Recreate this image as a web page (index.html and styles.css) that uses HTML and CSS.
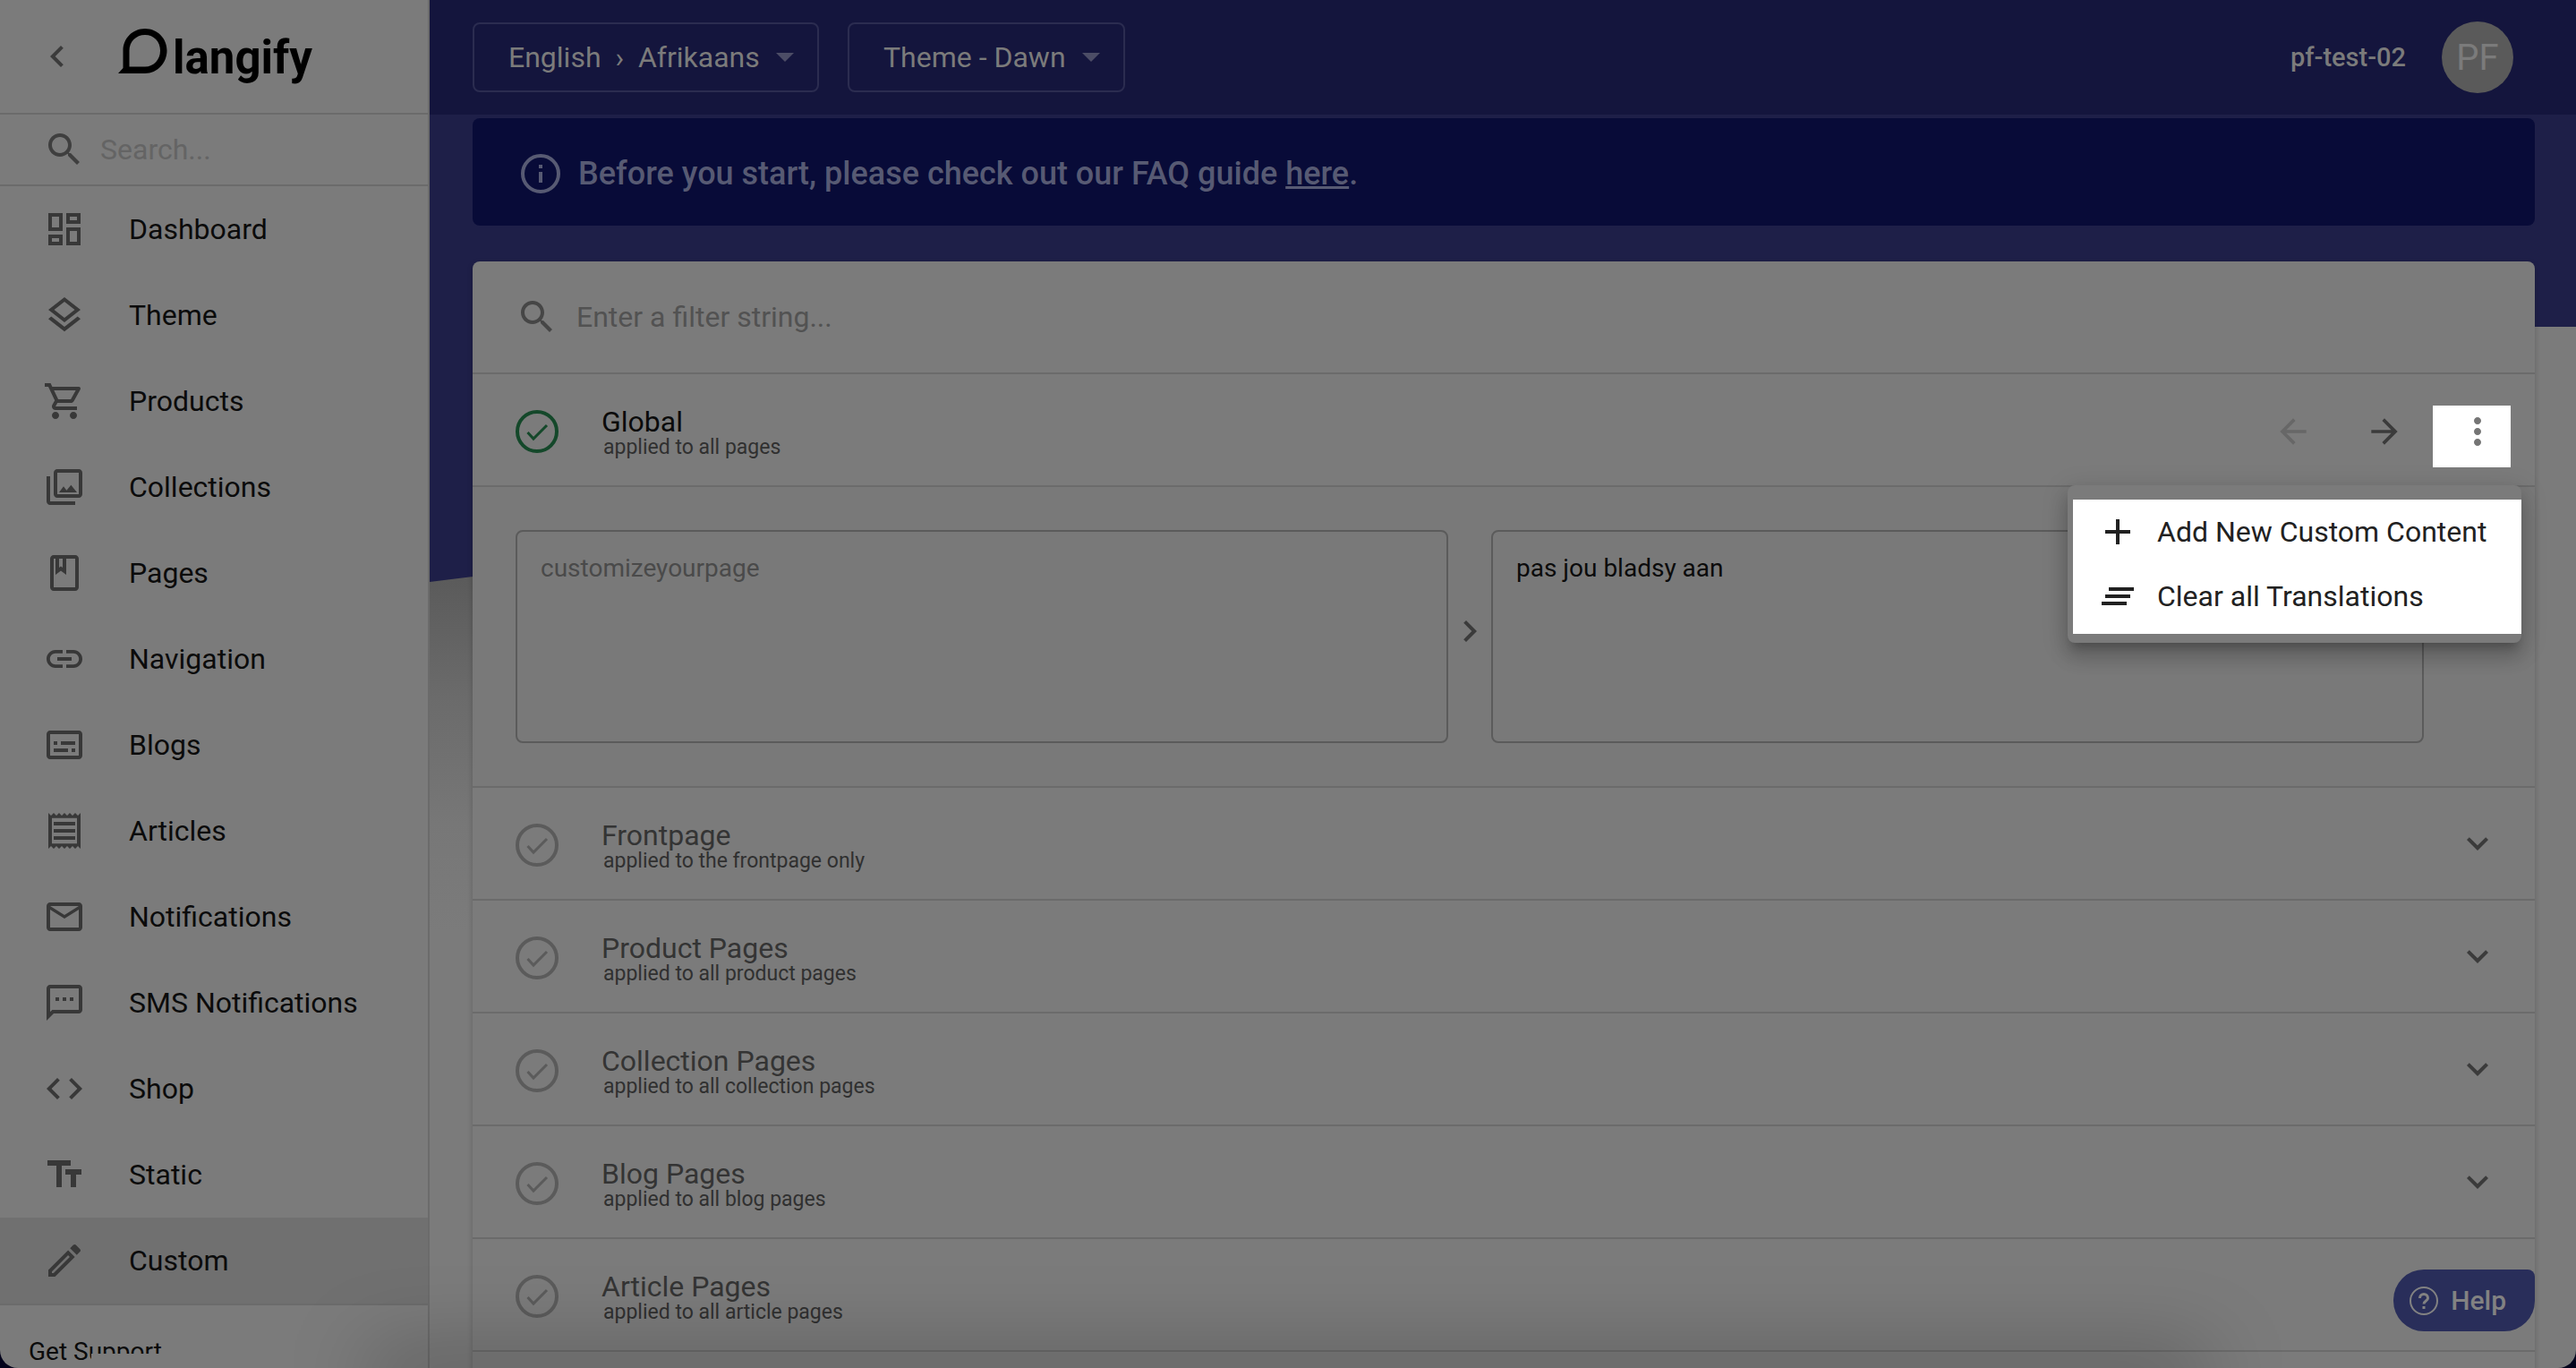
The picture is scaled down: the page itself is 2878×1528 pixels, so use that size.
FILE: index.html
```html
<!DOCTYPE html>
<html lang="en">
<head>
  <meta charset="UTF-8">
  <title>langify - Custom</title>
  <meta name="viewport" content="width=device-width, initial-scale=1.0">
  <link rel="stylesheet" href="styles.css">
</head>
<body>
  <div class="app">
    <aside class="sidebar">
      <div class="sidebar-header">
        <button class="icon-btn" aria-label="Collapse menu"><svg class="icon" viewBox="0 0 24 24"><path d="M15.41 7.41L14 6l-6 6 6 6 1.41-1.41L10.83 12z"/></svg></button>
        <a class="logo" href="#">
          <svg class="logo-mark" viewBox="0 0 55 50"><path fill-rule="evenodd" d="M0 50L5.500 44V24.500C5.500 11 16 0 30 0S54.500 11 54.500 24.500 44 50 30 50zM12.500 42.500H30C40 42.500 47 34.500 47 24.500S40 7 30 7 12.500 14.500 12.500 24.500z"/></svg>
          <span>langify</span>
        </a>
      </div>
      <label class="sidebar-search">
        <svg class="icon" viewBox="0 0 24 24"><path d="M15.500 14h-.79l-.28-.27C15.410 12.590 16 11.110 16 9.500 16 5.910 13.090 3 9.500 3S3 5.910 3 9.500 5.910 16 9.500 16c1.610 0 3.090-.59 4.230-1.570l.27.28v.79l5 4.990L20.490 19l-4.990-5zm-6 0C7.010 14 5 11.990 5 9.500S7.010 5 9.500 5 14 7.010 14 9.500 11.990 14 9.500 14z"/></svg>
        <input type="text" placeholder="Search..." aria-label="Search">
      </label>
      <nav class="menu">
        <a class="menu-item" href="#"><svg class="icon" viewBox="0 0 24 24"><path d="M19 5v2h-4V5h4M9 5v6H5V5h4m10 8v6h-4v-6h4M9 17v2H5v-2h4M21 3h-8v6h8V3zM11 3H3v10h8V3zm10 8h-8v10h8V11zm-10 4H3v6h8v-6z"/></svg>Dashboard</a>
        <a class="menu-item" href="#"><svg class="icon" viewBox="0 0 24 24"><path d="M11.990 18.540l-7.370-5.730L3 14.070l9 7 9-7-1.630-1.270zM12 16l7.360-5.730L21 9l-9-7-9 7 1.630 1.270L12 16zm0-11.470L17.740 9 12 13.470 6.260 9 12 4.530z"/></svg>Theme</a>
        <a class="menu-item" href="#"><svg class="icon" viewBox="0 0 24 24"><path d="M15.550 13c.75 0 1.410-.41 1.750-1.030l3.580-6.490c.37-.66-.11-1.480-.87-1.480H5.210l-.94-2H1v2h2l3.600 7.590-1.350 2.440C4.520 15.370 5.480 17 7 17h12v-2H7l1.100-2h7.450zM6.160 6h12.150l-2.760 5H8.530L6.160 6zM7 18c-1.100 0-1.990.9-1.990 2S5.900 22 7 22s2-.9 2-2-.9-2-2-2zm10 0c-1.100 0-1.990.9-1.990 2s.89 2 1.990 2 2-.9 2-2-.9-2-2-2z"/></svg>Products</a>
        <a class="menu-item" href="#"><svg class="icon" viewBox="0 0 24 24"><path d="M20 4v12H8V4h12m0-2H8c-1.100 0-2 .9-2 2v12c0 1.100.9 2 2 2h12c1.100 0 2-.9 2-2V4c0-1.100-.9-2-2-2zm-8.500 9.670l1.690 2.260 2.480-3.100L19 15H9zM2 6v14c0 1.100.9 2 2 2h14v-2H4V6H2z"/></svg>Collections</a>
        <a class="menu-item" href="#"><svg class="icon" viewBox="0 0 24 24"><path d="M18 2H6c-1.100 0-2 .9-2 2v16c0 1.100.9 2 2 2h12c1.100 0 2-.9 2-2V4c0-1.100-.9-2-2-2zM9 4h2v5l-1-.75L9 9V4zm9 16H6V4h1v9l3-2.250L13 13V4h5v16z"/></svg>Pages</a>
        <a class="menu-item" href="#"><svg class="icon" viewBox="0 0 24 24"><path d="M3.900 12c0-1.710 1.390-3.100 3.100-3.100h4V7H7c-2.760 0-5 2.240-5 5s2.240 5 5 5h4v-1.900H7c-1.710 0-3.100-1.390-3.100-3.100zM8 13h8v-2H8v2zm9-6h-4v1.900h4c1.710 0 3.100 1.390 3.100 3.100s-1.390 3.100-3.100 3.100h-4V17h4c2.760 0 5-2.240 5-5s-2.240-5-5-5z"/></svg>Navigation</a>
        <a class="menu-item" href="#"><svg class="icon" viewBox="0 0 24 24"><path d="M20 4H4c-1.100 0-2 .9-2 2v12c0 1.100.9 2 2 2h16c1.100 0 2-.9 2-2V6c0-1.100-.9-2-2-2zm0 14H4V6h16v12zM6 10h2v2H6zm0 4h8v2H6zm10 0h2v2h-2zm-6-4h8v2h-8z"/></svg>Blogs</a>
        <a class="menu-item" href="#"><svg class="icon" viewBox="0 0 24 24"><path d="M19.500 3.500L18 2l-1.500 1.500L15 2l-1.500 1.500L12 2l-1.500 1.500L9 2 7.500 3.500 6 2 4.500 3.500 3 2v20l1.500-1.500L6 22l1.500-1.500L9 22l1.500-1.500L12 22l1.500-1.500L15 22l1.500-1.500L18 22l1.500-1.500L21 22V2l-1.500 1.500zM19 19.090H5V4.910h14v14.180zM6 15h12v2H6zm0-4h12v2H6zm0-4h12v2H6z"/></svg>Articles</a>
        <a class="menu-item" href="#"><svg class="icon" viewBox="0 0 24 24"><path d="M22 6c0-1.100-.9-2-2-2H4c-1.100 0-2 .9-2 2v12c0 1.100.9 2 2 2h16c1.100 0 2-.9 2-2V6zm-2 0l-8 4.990L4 6h16zm0 12H4V8l8 5 8-5v10z"/></svg>Notifications</a>
        <a class="menu-item" href="#"><svg class="icon" viewBox="0 0 24 24"><path d="M20 2H4c-1.100 0-2 .9-2 2v18l4-4h14c1.100 0 2-.9 2-2V4c0-1.100-.9-2-2-2zm0 14H5.170L4 17.170V4h16v12zM7 9h2v2H7zm4 0h2v2h-2zm4 0h2v2h-2z"/></svg>SMS Notifications</a>
        <a class="menu-item" href="#"><svg class="icon" viewBox="0 0 24 24"><path d="M9.400 16.600L4.800 12l4.600-4.600L8 6l-6 6 6 6 1.400-1.400zm5.200 0l4.600-4.600-4.600-4.600L16 6l6 6-6 6-1.400-1.400z"/></svg>Shop</a>
        <a class="menu-item" href="#"><svg class="icon" viewBox="0 0 24 24"><path d="M2.500 4v3h5v12h3V7h5V4h-13zm19 5h-9v3h3v7h3v-7h3V9z"/></svg>Static</a>
        <a class="menu-item active" href="#"><svg class="icon" viewBox="0 0 24 24"><path d="M14.060 9.020l.92.92L5.920 19H5v-.92l9.060-9.060M17.660 3c-.25 0-.51.1-.7.29l-1.830 1.830 3.750 3.750 1.830-1.830c.39-.39.39-1.020 0-1.410l-2.340-2.340c-.2-.2-.45-.29-.71-.29zm-3.600 3.190L3 17.250V21h3.750L17.810 9.940l-3.750-3.750z"/></svg>Custom</a>
      </nav>
      <div class="support"><a href="#">Get Support</a></div>
    </aside>

    <main class="main">
      <header class="topbar">
        <label class="picker">
          <select aria-label="Language"><option>English&nbsp; › &nbsp;Afrikaans</option></select>
          <svg class="caret" viewBox="0 0 20 10"><path d="M0 0h20L10 10z"/></svg>
        </label>
        <label class="picker">
          <select aria-label="Theme"><option>Theme - Dawn</option></select>
          <svg class="caret" viewBox="0 0 20 10"><path d="M0 0h20L10 10z"/></svg>
        </label>
        <span class="shop-name">pf-test-02</span>
        <span class="avatar">PF</span>
      </header>

      <div class="content">
        <div class="banner">
          <svg class="icon-lg" viewBox="0 0 48 48"><circle cx="24" cy="24" r="20" fill="none" stroke="currentColor" stroke-width="4"/><path d="M22 22h4v12h-4zM22 14h4v4h-4z"/></svg>
          <p>Before you start, please check out our FAQ guide <a href="#">here</a>.</p>
        </div>

        <section class="card">
          <label class="filter">
            <svg class="icon" viewBox="0 0 24 24"><path d="M15.500 14h-.79l-.28-.27C15.410 12.590 16 11.110 16 9.500 16 5.910 13.090 3 9.500 3S3 5.910 3 9.500 5.910 16 9.500 16c1.610 0 3.090-.59 4.230-1.570l.27.28v.79l5 4.990L20.490 19l-4.990-5zm-6 0C7.010 14 5 11.990 5 9.500S7.010 5 9.500 5 14 7.010 14 9.500 11.990 14 9.500 14z"/></svg>
            <input type="text" placeholder="Enter a filter string..." aria-label="Filter">
          </label>

          <div class="group open">
            <svg class="check" viewBox="0 0 48 48"><circle cx="24" cy="24" r="22" stroke-width="4"/><path d="M13.500 25l6.500 7 15-15" stroke-width="3"/></svg>
            <div class="group-text"><h2>Global</h2><p>applied to all pages</p></div>
            <div class="actions">
              <button class="icon-btn" aria-label="Previous" disabled><svg class="arrow" viewBox="0 0 24 24"><path d="M20 11H7.830l5.590-5.590L12 4l-8 8 8 8 1.410-1.410L7.830 13H20v-2z"/></svg></button>
              <button class="icon-btn" aria-label="Next"><svg class="arrow" viewBox="0 0 24 24"><path d="M12 4l-1.410 1.410L16.170 11H4v2h12.170l-5.580 5.590L12 20l8-8z"/></svg></button>
              <button class="icon-btn more" aria-label="More actions"><svg class="icon" viewBox="0 0 24 24"><path d="M12 8c1.100 0 2-.9 2-2s-.9-2-2-2-2 .9-2 2 .9 2 2 2zm0 2c-1.100 0-2 .9-2 2s.9 2 2 2 2-.9 2-2-.9-2-2-2zm0 6c-1.100 0-2 .9-2 2s.9 2 2 2 2-.9 2-2-.9-2-2-2z"/></svg></button>
            </div>
            <div class="popup">
              <button class="popup-item"><svg class="icon" viewBox="0 0 24 24"><path d="M19 13h-6v6h-2v-6H5v-2h6V5h2v6h6v2z"/></svg>Add New Custom Content</button>
              <button class="popup-item"><svg class="icon" viewBox="0 0 24 24"><path d="M5 13h14v-2H5v2zm-2 4h14v-2H3v2zM7 7v2h14V7H7z"/></svg>Clear all Translations</button>
            </div>
          </div>

          <div class="translation">
            <textarea class="source" aria-label="Original" readonly>customizeyourpage</textarea>
            <svg class="icon" viewBox="0 0 24 24"><path d="M10 6L8.590 7.410 13.170 12l-4.580 4.590L10 18l6-6z"/></svg>
            <textarea aria-label="Translation">pas jou bladsy aan</textarea>
          </div>

          <div class="group">
            <svg class="check" viewBox="0 0 48 48"><circle cx="24" cy="24" r="22" stroke-width="4"/><path d="M13.500 25l6.500 7 15-15" stroke-width="3"/></svg>
            <div class="group-text"><h2>Frontpage</h2><p>applied to the frontpage only</p></div>
            <button class="icon-btn" aria-label="Expand"><svg class="icon" viewBox="0 0 24 24"><path d="M16.590 8.590L12 13.170 7.410 8.590 6 10l6 6 6-6z"/></svg></button>
          </div>
          <div class="group">
            <svg class="check" viewBox="0 0 48 48"><circle cx="24" cy="24" r="22" stroke-width="4"/><path d="M13.500 25l6.500 7 15-15" stroke-width="3"/></svg>
            <div class="group-text"><h2>Product Pages</h2><p>applied to all product pages</p></div>
            <button class="icon-btn" aria-label="Expand"><svg class="icon" viewBox="0 0 24 24"><path d="M16.590 8.590L12 13.170 7.410 8.590 6 10l6 6 6-6z"/></svg></button>
          </div>
          <div class="group">
            <svg class="check" viewBox="0 0 48 48"><circle cx="24" cy="24" r="22" stroke-width="4"/><path d="M13.500 25l6.500 7 15-15" stroke-width="3"/></svg>
            <div class="group-text"><h2>Collection Pages</h2><p>applied to all collection pages</p></div>
            <button class="icon-btn" aria-label="Expand"><svg class="icon" viewBox="0 0 24 24"><path d="M16.590 8.590L12 13.170 7.410 8.590 6 10l6 6 6-6z"/></svg></button>
          </div>
          <div class="group">
            <svg class="check" viewBox="0 0 48 48"><circle cx="24" cy="24" r="22" stroke-width="4"/><path d="M13.500 25l6.500 7 15-15" stroke-width="3"/></svg>
            <div class="group-text"><h2>Blog Pages</h2><p>applied to all blog pages</p></div>
            <button class="icon-btn" aria-label="Expand"><svg class="icon" viewBox="0 0 24 24"><path d="M16.590 8.590L12 13.170 7.410 8.590 6 10l6 6 6-6z"/></svg></button>
          </div>
          <div class="group">
            <svg class="check" viewBox="0 0 48 48"><circle cx="24" cy="24" r="22" stroke-width="4"/><path d="M13.500 25l6.500 7 15-15" stroke-width="3"/></svg>
            <div class="group-text"><h2>Article Pages</h2><p>applied to all article pages</p></div>
          </div>
          <div class="group-rest"></div>
        </section>
      </div>
    </main>

    <button class="help">
      <svg class="help-icon" viewBox="0 0 32 32"><circle cx="16" cy="16" r="15"/><path d="M11.500 13c0-6 9-6 9 0 0 3-4.500 3-4.500 6.500M16 22v3" stroke-width="3"/></svg>
      Help
    </button>
  </div>
</body>
</html>
```

FILE: styles.css
```css
* { box-sizing: border-box; }
html { background: #03031c; }
body {
  margin: 0;
  height: 100vh;
  overflow: hidden;
  font-family: Roboto, sans-serif;
  font-size: 32px;
  color: #0b0b0b;
}
h2, p { margin: 0; font-weight: 400; }
a { color: inherit; text-decoration: none; }
button, input, select, textarea { font: inherit; color: inherit; }
svg { display: block; flex-shrink: 0; fill: currentColor; }
.icon { width: 48px; height: 48px; }
.icon-lg { width: 48px; height: 48px; }
.icon-btn {
  background: none;
  border: none;
  padding: 0;
  color: #3b3b3b;
  cursor: pointer;
}

.app {
  position: relative;
  display: flex;
  height: 100%;
  background: #7b7b7b;
  border-radius: 0 0 20px 20px;
  overflow: hidden;
}
/* soft shade rising from the bottom edge */
.app::after {
  content: "";
  position: absolute;
  left: 15%;
  right: 15%;
  top: 100%;
  height: 20px;
  box-shadow: 0 0 90px 20px rgba(0, 0, 0, 0.25);
  pointer-events: none;
}

/* Sidebar */
.sidebar {
  width: 480px;
  flex-shrink: 0;
  border-right: 2px solid #6b6b6b;
}
.sidebar-header {
  display: flex;
  align-items: center;
  gap: 44px;
  height: 128px;
  padding-left: 40px;
  border-bottom: 2px solid #6b6b6b;
}
.logo {
  display: flex;
  align-items: center;
  gap: 6px;
  color: #000;
  font-size: 51px;
  font-weight: 700;
  line-height: 64px;
}
.logo span { padding-top: 4px; }
.logo-mark { width: 55px; height: 50px; margin-bottom: 12px; }
.sidebar-search {
  display: flex;
  align-items: center;
  gap: 16px;
  height: 80px;
  padding-left: 48px;
  border-bottom: 2px solid #6b6b6b;
  color: #3f3f3f;
}
input {
  flex: 1;
  min-width: 0;
  border: none;
  outline: none;
  padding: 0;
  background: none;
}
input::placeholder { color: #646464; opacity: 1; }
.menu { border-bottom: 2px solid #6b6b6b; }
.menu-item {
  display: flex;
  align-items: center;
  gap: 48px;
  height: 96px;
  padding-left: 48px;
}
.menu-item .icon { color: #383838; }
.menu-item.active { background: #707070; }
.support {
  position: relative;
  padding: 36px 32px;
  font-size: 28px;
  line-height: 32px;
}
.support::after {
  content: "";
  position: absolute;
  left: 102px;
  top: 54px;
  width: 100px;
  height: 24px;
  background: #7b7b7b;
}

/* Main */
.main {
  position: relative;
  flex: 1;
  min-width: 0;
  display: flex;
  flex-direction: column;
  background: linear-gradient(#5a5a5a 640px, #6b6b6b 780px, #777 920px, #7b7b7b 1040px) left / 48px 100% no-repeat;
}
.main::before {
  content: "";
  position: absolute;
  inset: 0 0 auto;
  height: 650px;
  background: #1e1f48;
  clip-path: polygon(0 0, 100% 0, 100% 365px, calc(100% - 46px) 365px, 0 650px);
}
.topbar {
  position: relative;
  display: flex;
  align-items: center;
  gap: 32px;
  height: 128px;
  flex-shrink: 0;
  padding: 0 70px 0 48px;
  background: #14153d;
  color: #7b7b7b;
}
.picker {
  display: flex;
  align-items: center;
  gap: 18px;
  height: 78px;
  padding: 0 26px 0 38px;
  border: 2px solid #2b2c50;
  border-radius: 8px;
}
.picker select {
  appearance: none;
  border: none;
  outline: none;
  padding: 0;
  background: none;
}
.caret { width: 20px; height: 10px; color: #4c4d66; }
.shop-name {
  margin-left: auto;
  font-size: 29px;
  font-weight: 500;
}
.avatar {
  display: flex;
  align-items: center;
  justify-content: center;
  width: 80px;
  height: 80px;
  margin-left: 8px;
  border-radius: 50%;
  background: #5a5a5a;
  font-size: 40px;
}
.content {
  position: relative;
  padding: 4px 46px 0 48px;
}
.banner {
  display: flex;
  align-items: center;
  gap: 18px;
  height: 120px;
  margin-bottom: 40px;
  padding: 3px 52px 0;
  border-radius: 8px;
  background: #080b38;
  color: #575a73;
  font-size: 36px;
}
.banner p { font-weight: 500; }
.banner a { text-decoration: underline; }

.card {
  border-radius: 8px;
  background: #7b7b7b;
  box-shadow: 0 2px 6px rgba(0, 0, 0, 0.2);
}
.filter {
  display: flex;
  align-items: center;
  gap: 20px;
  height: 126px;
  padding: 0 48px;
  border-bottom: 2px solid #6b6b6b;
  color: #464646;
}
.filter input::placeholder { color: #525252; }
.group {
  position: relative;
  display: flex;
  align-items: center;
  gap: 48px;
  height: 126px;
  padding: 4px 40px 0 48px;
  border-bottom: 2px solid #6b6b6b;
}
.group > .icon-btn { margin-bottom: 4px; }
.group h2 { font-size: 32px; line-height: 32px; color: #343434; }
.group p { font-size: 23px; line-height: 26px; color: #303030; padding-left: 2px; }
.group.open h2 { color: #0b0b0b; }
.group-text { flex: 1; padding-top: 3px; }
.group-rest { height: 126px; }
.check {
  width: 48px;
  height: 48px;
  fill: none;
  stroke: #5b5b5b;
}
.open .check { stroke: #14482a; }
.actions { display: flex; align-items: center; gap: 58px; }
.actions button:disabled { color: #676767; }
.arrow { width: 44px; height: 44px; }
.more { position: relative; color: #757575; }
.more::before {
  content: "";
  position: absolute;
  left: -26px;
  top: -5px;
  width: 87px;
  height: 69px;
  background: #fff;
}
.more .icon { position: relative; }

/* Context menu */
.popup {
  position: absolute;
  top: 124px;
  right: 15px;
  z-index: 2;
  min-width: 507px;
  padding: 16px 0;
  border-radius: 8px;
  background: #7b7b7b;
  box-shadow: 0 10px 10px -6px rgba(0, 0, 0, 0.2), 0 16px 20px 2px rgba(0, 0, 0, 0.14), 0 6px 28px 4px rgba(0, 0, 0, 0.12);
}
.popup::before {
  content: "";
  position: absolute;
  inset: 16px 0 10px 6px;
  background: #fff;
}
.popup-item {
  position: relative;
  display: flex;
  align-items: center;
  gap: 20px;
  height: 72px;
  padding: 0 32px;
  border: none;
  background: none;
  color: #212121;
  white-space: nowrap;
  cursor: pointer;
}

.translation {
  display: grid;
  grid-template-columns: 1fr 48px 1fr;
  align-items: center;
  height: 336px;
  padding: 0 124px 0 48px;
  border-bottom: 2px solid #6b6b6b;
  background: #797979;
  color: #3b3b3b;
}
.translation .icon { margin-bottom: 12px; }
textarea {
  height: 238px;
  padding: 24px 26px;
  border: 2px solid #5b5b5b;
  border-radius: 8px;
  outline: none;
  resize: none;
  background: none;
  color: #0b0b0b;
  font-size: 28px;
  line-height: 34px;
}
textarea.source { color: #4a4a4a; }

.help {
  position: absolute;
  right: 46px;
  bottom: 41px;
  display: flex;
  align-items: center;
  gap: 14px;
  height: 69px;
  padding: 0 32px 0 18px;
  border: none;
  border-radius: 34px 8px 34px 34px;
  background: #292e5a;
  color: #828282;
  font-size: 30px;
  font-weight: 500;
}
.help-icon {
  width: 32px;
  height: 32px;
  fill: none;
  stroke: currentColor;
  stroke-width: 2px;
}
.help-icon path { stroke-width: 3px; }
```
